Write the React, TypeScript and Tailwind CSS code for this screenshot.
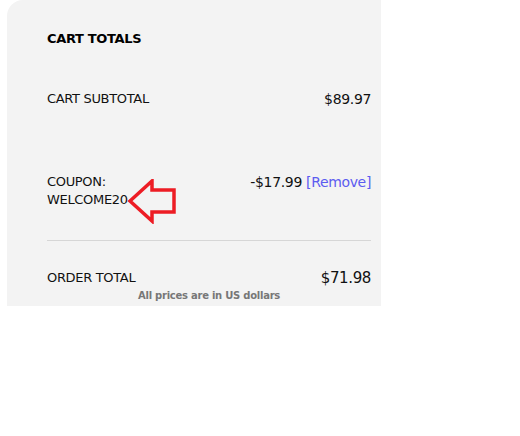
import React from 'react';

export default function App() {
  return (
    <div className="w-[520px] h-[436px] bg-white" style={{ fontFamily: '"DejaVu Sans", sans-serif' }}>
      <div className="relative ml-[7px] w-[374px] h-[306px] bg-[#f3f3f3] rounded-tl-2xl pl-10 pr-2.5 pt-[29px] text-[#111]">
        <h2 className="text-[13px] leading-5 font-bold tracking-tight text-black">CART TOTALS</h2>

        <div className="mt-[40px] flex justify-between items-center h-5">
          <span className="text-[13px] tracking-tight">CART SUBTOTAL</span>
          <span className="text-[14px] tracking-tight">$89.97</span>
        </div>

        <div className="mt-[64px] flex justify-between items-start">
          <span className="text-[13px] leading-[18px] tracking-tight">
            COUPON:
            <br />
            WELCOME20
          </span>
          <span className="text-[14px] leading-[18px] tracking-tight">
            -$17.99 <span className="text-[#5c5cf0]">[Remove]</span>
          </span>
        </div>

        <div className="mt-[31px] h-px bg-[#d6d6d6]" />

        <div className="mt-[27px] flex justify-between items-center h-5">
          <span className="text-[13px] tracking-tight">ORDER TOTAL</span>
          <span className="text-[15px] tracking-tight">$71.98</span>
        </div>
        <p className="text-center text-[10px] leading-4 font-bold tracking-tight text-[#777]">All prices are in US dollars</p>

        <svg className="absolute left-[119px] top-[179px]" width="52" height="45" viewBox="0 0 52 45">
          <polygon
            points="4,22 26,2 26,11 48,11 48,33 26,33 26,42"
            fill="none"
            stroke="#ed1c24"
            strokeWidth="3.5"
            strokeLinejoin="miter"
          />
        </svg>
      </div>
    </div>
  );
}
